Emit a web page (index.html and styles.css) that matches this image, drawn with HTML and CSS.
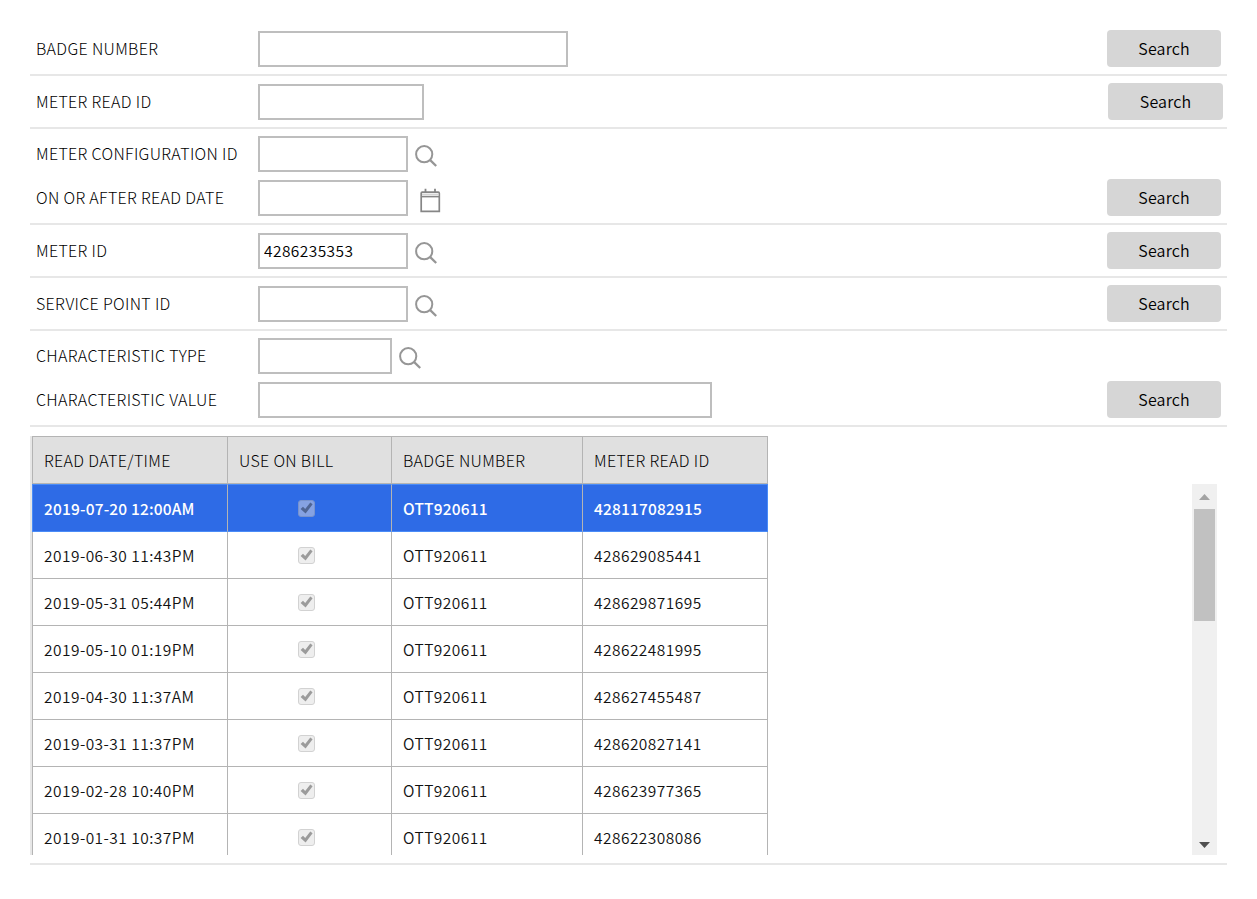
FILE: index.html
```
<!DOCTYPE html>
<html lang="en">
<head>
<meta charset="utf-8">
<title>Meter Read Search</title>
<link rel="stylesheet" href="styles.css">
</head>
<body>
<svg class="defs" width="0" height="0">
  <symbol id="lens" viewBox="0 0 24 24"><circle cx="10.2" cy="10.2" r="8.1" fill="none" stroke="#969696" stroke-width="2"/><path d="M16.2 16.2L22.2 22" stroke="#969696" stroke-width="2.3" fill="none"/></symbol>
  <symbol id="check" viewBox="0 0 15 15"><path d="M1.6 8L4 5.8L6.2 8L11.3 1.5L13.6 3.3L6.6 12.6Z" fill="currentColor"/></symbol>
</svg>
<main class="page">
  <section class="group">
    <div class="line"><label class="label">BADGE NUMBER</label><input class="field w310"><button class="search">Search</button></div>
  </section>
  <section class="group">
    <div class="line"><label class="label">METER READ ID</label><input class="field w166"><button class="search wide">Search</button></div>
  </section>
  <section class="group double">
    <div class="line"><label class="label">METER CONFIGURATION ID</label><input class="field"><svg class="lens"><use href="#lens"/></svg></div>
    <div class="line"><label class="label">ON OR AFTER READ DATE</label><input class="field">
      <svg class="calendar" viewBox="0 0 22 26"><path d="M3.2 4.2H19.3Q20.3 4.2 20.3 5.2V23.3H2.2V5.2Q2.2 4.2 3.2 4.2Z" fill="none" stroke="#868686" stroke-width="1.7"/><path d="M3 6.6H19.5" stroke="#d4d4d4" stroke-width="2"/><path d="M2 8.7H20" stroke="#868686" stroke-width="1.4"/><path d="M6.5 0.8V5M16 0.8V5" stroke="#868686" stroke-width="1.8"/></svg>
      <button class="search">Search</button></div>
  </section>
  <section class="group">
    <div class="line"><label class="label">METER ID</label><input class="field" value="4286235353"><svg class="lens"><use href="#lens"/></svg><button class="search">Search</button></div>
  </section>
  <section class="group">
    <div class="line"><label class="label">SERVICE POINT ID</label><input class="field"><svg class="lens"><use href="#lens"/></svg><button class="search">Search</button></div>
  </section>
  <section class="group double">
    <div class="line"><label class="label">CHARACTERISTIC TYPE</label><input class="field w134"><svg class="lens"><use href="#lens"/></svg></div>
    <div class="line"><label class="label">CHARACTERISTIC VALUE</label><input class="field w454"><button class="search">Search</button></div>
  </section>
  <section class="results">
    <div class="grid">
      <div class="row head"><span>READ DATE/TIME</span><span>USE ON BILL</span><span>BADGE NUMBER</span><span>METER READ ID</span></div>
      <div class="row selected"><span>2019-07-20 12:00AM</span><span class="mid"><i class="box"><svg><use href="#check"/></svg></i></span><span>OTT920611</span><span>428117082915</span></div>
      <div class="row"><span>2019-06-30 11:43PM</span><span class="mid"><i class="box"><svg><use href="#check"/></svg></i></span><span>OTT920611</span><span>428629085441</span></div>
      <div class="row"><span>2019-05-31 05:44PM</span><span class="mid"><i class="box"><svg><use href="#check"/></svg></i></span><span>OTT920611</span><span>428629871695</span></div>
      <div class="row"><span>2019-05-10 01:19PM</span><span class="mid"><i class="box"><svg><use href="#check"/></svg></i></span><span>OTT920611</span><span>428622481995</span></div>
      <div class="row"><span>2019-04-30 11:37AM</span><span class="mid"><i class="box"><svg><use href="#check"/></svg></i></span><span>OTT920611</span><span>428627455487</span></div>
      <div class="row"><span>2019-03-31 11:37PM</span><span class="mid"><i class="box"><svg><use href="#check"/></svg></i></span><span>OTT920611</span><span>428620827141</span></div>
      <div class="row"><span>2019-02-28 10:40PM</span><span class="mid"><i class="box"><svg><use href="#check"/></svg></i></span><span>OTT920611</span><span>428623977365</span></div>
      <div class="row"><span>2019-01-31 10:37PM</span><span class="mid"><i class="box"><svg><use href="#check"/></svg></i></span><span>OTT920611</span><span>428622308086</span></div>
    </div>
    <div class="scrollbar">
      <svg class="arrow" viewBox="0 0 25 25"><path d="M7 16L12.5 10L18 16Z" fill="#a3a3a3"/></svg>
      <div class="thumb"></div>
      <svg class="arrow down" viewBox="0 0 25 25"><path d="M7 12H18L12.5 18Z" fill="#505050"/></svg>
    </div>
  </section>
</main>
</body>
</html>
```
FILE: styles.css
```
* { box-sizing: border-box; }
body { margin: 0; background: #fff; color: #111; font: 16px/24px "Noto Sans CJK SC", "Noto Sans", sans-serif; }
.defs { display: block; }
.page { width: 1197px; margin-left: 30px; padding-top: 23px; }
.group { padding: 8px 0 7px; border-bottom: 2px solid #e7e7e7; }
.group.double { display: flex; flex-direction: column; gap: 8px; padding-top: 7px; }
.line { display: flex; height: 36px; align-items: flex-start; }
.label { width: 228px; padding-left: 6px; line-height: 34px; font-weight: 300; letter-spacing: 0.33px; color: #000; white-space: nowrap; }
.field { width: 150px; height: 36px; margin: 0; padding: 0 4px 2px; border: 2px solid #bebebe; background: #fff; font: inherit; font-size: 15.5px; font-weight: 350; letter-spacing: 0.43px; color: #000; outline: 0; }
.w310 { width: 310px; }
.w166 { width: 166px; }
.w134 { width: 134px; }
.w454 { width: 454px; }
.lens { width: 24px; height: 24px; margin: 8px 0 0 6px; }
.calendar { width: 22px; height: 26px; margin: 8px 0 0 11px; }
.search { width: 114px; height: 37px; margin: -1px 6px 0 auto; padding: 0 0 2px 0; border: 0; border-radius: 4px; background: #d6d6d6; font: inherit; font-weight: 350; letter-spacing: 0.15px; color: #000; }
.search.wide { width: 115px; margin-right: 4px; }
.results { display: flex; justify-content: space-between; height: 438px; padding: 9px 10px 0 0; border-bottom: 2px solid #e7e7e7; }
.grid { width: 738px; height: 419px; overflow: hidden; border-left: 2px solid #e7e7e7; }
.row { display: grid; grid-template-columns: 195px 164px 191px 185px; height: 47px; border-left: 1px solid #b4b4b4; }
.row > span { display: flex; align-items: center; padding: 0 0 0 11px; border-right: 1px solid #b4b4b4; border-bottom: 1px solid #b4b4b4; white-space: nowrap; font-size: 15.5px; font-weight: 350; letter-spacing: 0.46px; }
.row.head { height: 48px; border-top: 1px solid #b4b4b4; background: #e0e0e0; }
.row.head > span { font-size: 16px; font-weight: 300; letter-spacing: 0.33px; color: #000; }
.row.selected { height: 48px; background: #2e6be6; color: #fff; border-left-color: #4a8cf7; }
.row.selected > span { font-weight: 500; letter-spacing: 0.16px; border-top: 1px solid #4a8cf7; border-bottom-color: #4a8cf7; }
.row > .mid, .row.selected > .mid { justify-content: center; padding: 0 7px 0 0; }
.row.selected > span:last-child { border-right-color: #4a8cf7; }
.box { display: block; width: 17px; height: 17px; border: 1px solid #d2d2d2; border-radius: 3px; background: #eee; color: #9b9b9b; }
.box svg { display: block; width: 15px; height: 15px; }
.selected .box { border-color: #7893cd; background: #86a2e2; color: #4f6594; }
.scrollbar { display: flex; flex-direction: column; align-items: center; width: 25px; height: 371px; margin-top: 48px; background: #f0f0f0; }
.arrow { display: block; width: 25px; height: 25px; }
.arrow.down { margin-top: auto; }
.thumb { width: 21px; height: 112px; background: #c1c1c1; }
```
